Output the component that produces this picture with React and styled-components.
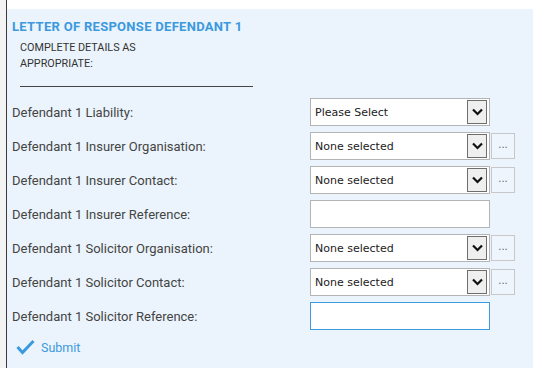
import styled, { createGlobalStyle } from 'styled-components'

const Global = createGlobalStyle`
  body {
    margin: 0;
    background: #fff;
    font-family: Roboto, "Liberation Sans", sans-serif;
  }
`

const Page = styled.div`
  display: flex;
  min-height: 368px;
`

const Rail = styled.div`
  width: 6px;
  background: #f3f3f3;
  border-right: 1px solid #3a3a3a;
`

const Main = styled.div`
  flex: 1;
  padding-top: 9px;
  display: flex;
  flex-direction: column;
`

const Panel = styled.div`
  flex: 1;
  background: #ebf4fc;
  padding: 10px 5px 0 5px;
`

const Title = styled.h3`
  margin: 0;
  color: #3b99de;
  font-family: Roboto, sans-serif;
  font-size: 13px;
  font-weight: 700;
  letter-spacing: 0.3px;
  line-height: 16px;
`

const Note = styled.div`
  margin: 5px 0 0 8px;
  width: 140px;
  color: #333;
  font-size: 10.8px;
  line-height: 16px;
`

const Rule = styled.hr`
  margin: 14px 0 0 8px;
  width: 233px;
  border: 0;
  border-top: 1px solid #444;
`

const Form = styled.div`
  display: grid;
  grid-template-columns: 298px auto;
  row-gap: 6px;
  margin-top: 11px;
`

const Label = styled.label`
  display: flex;
  align-items: center;
  color: #444;
  font-size: 13px;
`

const Control = styled.div`
  display: flex;
  align-items: center;
  gap: 1px;
`

const Select = styled.div`
  box-sizing: border-box;
  width: 180px;
  height: 28px;
  background: #fff;
  border: 1px solid #b4b4b4;
  display: flex;
  align-items: center;
  justify-content: space-between;
  padding: 0 2px 0 4px;
  font-family: "DejaVu Sans", sans-serif;
  font-size: 11px;
  color: #222;
`

const Arrow = styled.span`
  box-sizing: border-box;
  width: 20px;
  height: 24px;
  background: #efefef;
  border: 1px solid #6e6e6e;
  display: flex;
  align-items: center;
  justify-content: center;
`

const More = styled.button`
  box-sizing: border-box;
  width: 24px;
  height: 26px;
  padding: 0 0 4px;
  background: #eef5fc;
  border: 1px solid #c8c8c8;
  color: #666;
  font-size: 10px;
  font-family: "DejaVu Sans", sans-serif;
`

const Input = styled.input`
  box-sizing: border-box;
  width: 180px;
  height: 28px;
  margin: 0;
  background: #fff;
  border: 1px solid ${p => (p.$focus ? '#3d9be0' : '#b4b4b4')};
  outline: none;
`

const Submit = styled.button`
  display: flex;
  align-items: center;
  gap: 6px;
  margin: 9px 0 0 4px;
  padding: 0;
  border: 0;
  background: none;
  color: #3b99de;
  font-family: Roboto, sans-serif;
  font-size: 12.5px;
`

const Chevron = () => (
  <svg width="11" height="8" viewBox="0 0 11 8">
    <polyline points="1,1.5 5.5,6 10,1.5" fill="none" stroke="#111" strokeWidth="2.2" />
  </svg>
)

const Check = () => (
  <svg width="19" height="16" viewBox="0 0 19 16">
    <polyline points="1.5,8 6.5,13.5 17.5,2" fill="none" stroke="#3b99de" strokeWidth="3" />
  </svg>
)

const rows = [
  { label: 'Defendant 1 Liability:', type: 'select', value: 'Please Select' },
  { label: 'Defendant 1 Insurer Organisation:', type: 'select', value: 'None selected', more: true },
  { label: 'Defendant 1 Insurer Contact:', type: 'select', value: 'None selected', more: true },
  { label: 'Defendant 1 Insurer Reference:', type: 'text' },
  { label: 'Defendant 1 Solicitor Organisation:', type: 'select', value: 'None selected', more: true },
  { label: 'Defendant 1 Solicitor Contact:', type: 'select', value: 'None selected', more: true },
  { label: 'Defendant 1 Solicitor Reference:', type: 'text', focus: true },
]

export default function App() {
  return (
    <>
      <Global />
      <Page>
        <Rail />
        <Main>
          <Panel>
            <Title>LETTER OF RESPONSE DEFENDANT 1</Title>
            <Note>COMPLETE DETAILS AS APPROPRIATE:</Note>
            <Rule />
            <Form>
              {rows.map(r => (
                <>
                  <Label key={r.label}>{r.label}</Label>
                  <Control>
                    {r.type === 'select' ? (
                      <Select>
                        {r.value}
                        <Arrow><Chevron /></Arrow>
                      </Select>
                    ) : (
                      <Input $focus={r.focus} />
                    )}
                    {r.more && <More>...</More>}
                  </Control>
                </>
              ))}
            </Form>
            <Submit><Check />Submit</Submit>
          </Panel>
        </Main>
      </Page>
    </>
  )
}
